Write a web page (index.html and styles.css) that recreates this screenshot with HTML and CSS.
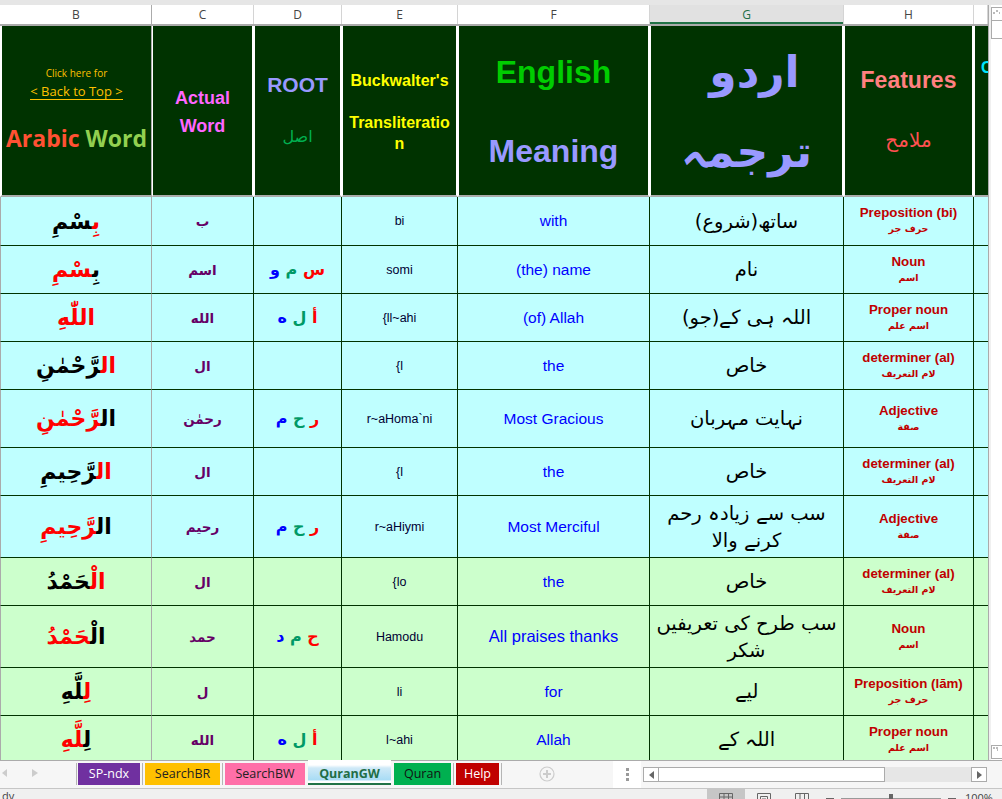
FILE: index.html
```html
<!DOCTYPE html>
<html lang="ur">
<head>
  <meta charset="UTF-8" />
  <meta name="viewport" content="width=device-width, initial-scale=1" />
  <title>QuranGW</title>
  <link rel="stylesheet" href="styles.css">
</head>
<body>
  <div class="top-strip"></div>

  <div class="main-area">
    <div class="sheet">
      <div class="col-heads">
        <div class="col-head col-b">B</div>
        <div class="col-head col-c">C</div>
        <div class="col-head col-d">D</div>
        <div class="col-head col-e">E</div>
        <div class="col-head col-f">F</div>
        <div class="col-head col-g selected">G</div>
        <div class="col-head col-h">H</div>
        <div class="col-head col-i"></div>
      </div>

      <div class="grid-clip">
        <table class="grid">
          <colgroup>
            <col class="col-b"><col class="col-c"><col class="col-d"><col class="col-e">
            <col class="col-f"><col class="col-g"><col class="col-h"><col class="col-i">
          </colgroup>
          <tr class="head-row">
            <th>
              <div class="click-here">Click here for</div>
              <div class="back-top">&lt; Back to Top &gt;</div>
              <div class="arabic-word"><span class="c-orange">Arabic</span> <span class="c-lime">Word</span></div>
            </th>
            <th class="actual">Actual<br>Word</th>
            <th class="root-head">
              <div class="root-en">ROOT</div>
              <div class="root-ar" dir="rtl">اصل</div>
            </th>
            <th class="buck">Buckwalter's<br><br>Transliteratio<br>n</th>
            <th class="meaning"><div class="c-green">English</div><div class="c-blue">Meaning</div></th>
            <th class="urdu-head" dir="rtl"><div class="urdu-top">اردو</div><div>ترجمہ</div></th>
            <th class="feat-head"><div class="feat-en">Features</div><div class="feat-ar" dir="rtl">ملامح</div></th>
            <th class="cut-head">C</th>
          </tr>

          <tr class="blue h49">
            <td class="ar" dir="rtl"><span class="red">بِ</span>سْمِ</td>
            <td class="act" dir="rtl">ب</td><td class="root"></td><td class="tr">bi</td><td class="en">with</td>
            <td class="ur" dir="rtl">ساتھ(شروع)</td>
            <td class="ft"><b>Preposition (bi)</b><i dir="rtl">حرف جر</i></td><td></td>
          </tr>
          <tr class="blue h48">
            <td class="ar" dir="rtl">بِ<span class="red">سْمِ</span></td>
            <td class="act" dir="rtl">اسم</td>
            <td class="root" dir="rtl"><span class="red">س</span> <span class="teal">م</span> <span class="blu">و</span></td>
            <td class="tr">somi</td><td class="en">(the) name</td>
            <td class="ur" dir="rtl">نام</td>
            <td class="ft"><b>Noun</b><i dir="rtl">اسم</i></td><td></td>
          </tr>
          <tr class="blue h48">
            <td class="ar" dir="rtl"><span class="red">اللّٰهِ</span></td>
            <td class="act" dir="rtl">الله</td>
            <td class="root" dir="rtl"><span class="red">أ</span> <span class="teal">ل</span> <span class="blu">ه</span></td>
            <td class="tr">{ll~ahi</td><td class="en">(of) Allah</td>
            <td class="ur" dir="rtl">اللہ ہی کے(جو)</td>
            <td class="ft"><b>Proper noun</b><i dir="rtl">اسم علم</i></td><td></td>
          </tr>
          <tr class="blue h48">
            <td class="ar" dir="rtl"><span class="red">ال</span>رَّحْمٰنِ</td>
            <td class="act" dir="rtl">ال</td><td class="root"></td><td class="tr">{l</td><td class="en">the</td>
            <td class="ur" dir="rtl">خاص</td>
            <td class="ft"><b>determiner (al)</b><i dir="rtl">لام التعریف</i></td><td></td>
          </tr>
          <tr class="blue h58">
            <td class="ar" dir="rtl">ال<span class="red">رَّحْمٰنِ</span></td>
            <td class="act" dir="rtl">رحمٰن</td>
            <td class="root" dir="rtl"><span class="red">ر</span> <span class="teal">ح</span> <span class="blu">م</span></td>
            <td class="tr">r~aHoma`ni</td><td class="en">Most Gracious</td>
            <td class="ur" dir="rtl">نہایت مہربان</td>
            <td class="ft"><b>Adjective</b><i dir="rtl">صفة</i></td><td></td>
          </tr>
          <tr class="blue h48">
            <td class="ar" dir="rtl"><span class="red">ال</span>رَّحِيمِ</td>
            <td class="act" dir="rtl">ال</td><td class="root"></td><td class="tr">{l</td><td class="en">the</td>
            <td class="ur" dir="rtl">خاص</td>
            <td class="ft"><b>determiner (al)</b><i dir="rtl">لام التعریف</i></td><td></td>
          </tr>
          <tr class="blue h62">
            <td class="ar" dir="rtl">ال<span class="red">رَّحِيمِ</span></td>
            <td class="act" dir="rtl">رحیم</td>
            <td class="root" dir="rtl"><span class="red">ر</span> <span class="teal">ح</span> <span class="blu">م</span></td>
            <td class="tr">r~aHiymi</td><td class="en">Most Merciful</td>
            <td class="ur" dir="rtl">سب سے زیادہ رحم کرنے والا</td>
            <td class="ft"><b>Adjective</b><i dir="rtl">صفة</i></td><td></td>
          </tr>

          <tr class="green h48">
            <td class="ar" dir="rtl"><span class="red">الْ</span>حَمْدُ</td>
            <td class="act" dir="rtl">ال</td><td class="root"></td><td class="tr">{lo</td><td class="en">the</td>
            <td class="ur" dir="rtl">خاص</td>
            <td class="ft"><b>determiner (al)</b><i dir="rtl">لام التعریف</i></td><td></td>
          </tr>
          <tr class="green h62">
            <td class="ar" dir="rtl">الْ<span class="red">حَمْدُ</span></td>
            <td class="act" dir="rtl">حمد</td>
            <td class="root" dir="rtl"><span class="red">ح</span> <span class="teal">م</span> <span class="blu">د</span></td>
            <td class="tr">Hamodu</td><td class="en en-big">All praises thanks</td>
            <td class="ur" dir="rtl">سب طرح کی تعریفیں شکر</td>
            <td class="ft"><b>Noun</b><i dir="rtl">اسم</i></td><td></td>
          </tr>
          <tr class="green h48">
            <td class="ar" dir="rtl"><span class="red">لِ</span>لَّهِ</td>
            <td class="act" dir="rtl">ل</td><td class="root"></td><td class="tr">li</td><td class="en">for</td>
            <td class="ur" dir="rtl">لیے</td>
            <td class="ft"><b>Preposition (lām)</b><i dir="rtl">حرف جر</i></td><td></td>
          </tr>
          <tr class="green h48">
            <td class="ar" dir="rtl">لِ<span class="red">لَّهِ</span></td>
            <td class="act" dir="rtl">الله</td>
            <td class="root" dir="rtl"><span class="red">أ</span> <span class="teal">ل</span> <span class="blu">ه</span></td>
            <td class="tr">l~ahi</td><td class="en">Allah</td>
            <td class="ur" dir="rtl">اللہ کے</td>
            <td class="ft"><b>Proper noun</b><i dir="rtl">اسم علم</i></td><td></td>
          </tr>
        </table>
      </div>
    </div>

    <div class="v-scroll">
      <div class="split-box"><svg width="9" height="6" viewBox="0 0 9 6"><path d="M1 5h2M4 3h2M7 5h1" stroke="#777" fill="none"/></svg></div>
      <div class="v-btn"></div>
      <div class="v-track"></div>
      <div class="split-box bottom"><svg width="9" height="6" viewBox="0 0 9 6"><path d="M1 2h2M4 2h2M5 4h1" stroke="#777" fill="none"/></svg></div>
    </div>
  </div>

  <div class="tab-bar">
    <div class="tab-nav">
      <svg width="6" height="8" viewBox="0 0 6 8"><path d="M5 0v8L0 4z" fill="#ccc"/></svg>
      <svg width="6" height="8" viewBox="0 0 6 8"><path d="M0 0v8l6-4z" fill="#ccc"/></svg>
    </div>
    <div class="tabs">
      <div class="tab t-purple">SP-ndx</div>
      <div class="tab t-amber">SearchBR</div>
      <div class="tab t-pink">SearchBW</div>
      <div class="tab t-active">QuranGW</div>
      <div class="tab t-green">Quran</div>
      <div class="tab t-red">Help</div>
    </div>
    <div class="add-sheet">
      <svg width="16" height="16" viewBox="0 0 16 16"><circle cx="8" cy="8" r="7" fill="none" stroke="#ccc" stroke-width="1.2"/><path d="M8 4v8M4 8h8" stroke="#ccc" stroke-width="2"/></svg>
    </div>
    <div class="tab-dots"><span></span><span></span><span></span></div>
    <div class="h-scroll">
      <div class="h-btn"><svg width="5" height="8" viewBox="0 0 5 8"><path d="M5 0v8L0 4z" fill="#666"/></svg></div>
      <div class="h-thumb"></div>
      <div class="h-track"></div>
      <div class="h-btn"><svg width="5" height="8" viewBox="0 0 5 8"><path d="M0 0v8l5-4z" fill="#666"/></svg></div>
    </div>
  </div>

  <div class="status-bar">
    <div class="ready">dy</div>
    <div class="view-btn on"><svg width="14" height="12" viewBox="0 0 14 12"><path d="M.5.5h13v11H.5zM.5 4h13M.5 8h13M5 .5v11M9.500 .5v11" fill="none" stroke="#666"/></svg></div>
    <div class="view-btn"><svg width="14" height="12" viewBox="0 0 14 12"><path d="M.5.5h13v11H.5zM3.500 3.500h7v8h-7zM5 6h4M5 8h4" fill="none" stroke="#666"/></svg></div>
    <div class="view-btn"><svg width="14" height="12" viewBox="0 0 14 12"><path d="M.5.5h13v11H.5zM5 .5v11M9.500 .5v11" fill="none" stroke="#666"/></svg></div>
    <div class="zoom-minus"></div>
    <div class="zoom-slider"><span></span></div>
    <div class="zoom-plus"></div>
    <div class="zoom-pct">100%</div>
  </div>
</body>
</html>
```

FILE: styles.css
```css
* {
  margin: 0;
  padding: 0;
  box-sizing: border-box;
}
html, body {
  width: 1002px;
  height: 799px;
  overflow: hidden;
  background: #f0f0f0;
  font-family: 'Liberation Sans', 'DejaVu Sans', sans-serif;
}
.top-strip {
  height: 5px;
  background: #e6e6e6;
}
.main-area {
  display: flex;
  height: 755px;
  background: #fff;
}
.sheet {
  width: 989px;
  flex-shrink: 0;
  border-right: 1px solid #ababab;
}
/* Заголовки столбцов */
.col-heads {
  display: flex;
  height: 21px;
  padding-left: 1px;
  border-bottom: 2px solid #ababab;
  background: #fff;
}
.col-head {
  font-family: 'Open Sans', sans-serif;
  font-size: 12px;
  line-height: 19px;
  text-align: center;
  color: #444;
  border-right: 1px solid #d4d4d4;
  flex-shrink: 0;
}
.col-head.col-b { border-right: 1px solid #ababab; }
.col-head.selected {
  background: #e1e1e1;
  color: #1f6e46;
  box-shadow: inset 0 -2px 0 #217346;
}
.col-b { width: 151px; }
.col-c { width: 102px; }
.col-d { width: 88px; }
.col-e { width: 116px; }
.col-f { width: 192px; }
.col-g { width: 194px; }
.col-h { width: 130px; }
.col-i { width: 14px; }
.grid col.col-b { width: 152px; }

.grid-clip {
  height: 734px;
  overflow: hidden;
}
.grid {
  table-layout: fixed;
  width: 988px;
  border-collapse: separate;
  border-spacing: 0;
}
/* Шапка таблицы */
.head-row th {
  height: 171px;
  padding-top: 3px;
  background: #003300;
  border-right: 2px solid #fff;
  border-bottom: 2px solid #ababab;
  border-left: 1px solid #fff;
  font-weight: 700;
  text-align: center;
  vertical-align: middle;
  overflow: hidden;
}
.head-row th:first-child {
  border-left: 2px solid #fff;
  border-right: 1px solid #ababab;
  padding-bottom: 5px;
}
.head-row th.cut-head {
  border-right: 0;
  text-align: left;
  font-size: 16px;
  color: #00e5ff;
  padding: 0 0 86px 6px;
  white-space: nowrap;
}
.click-here {
  font-size: 10px;
  font-family: 'Open Sans', sans-serif;
  font-weight: 400;
  color: #ffc000;
}
.back-top {
  font-size: 13px;
  font-family: 'Open Sans', sans-serif;
  font-weight: 400;
  color: #ffc000;
  display: inline-block;
  border-bottom: 1px solid #ffc000;
  margin-top: 3px;
  line-height: 16px;
}
.arabic-word {
  font-family: 'Open Sans', sans-serif;
  font-size: 23px;
  margin-top: 22px;
}
.c-orange { color: #ff5133; }
.c-lime { color: #92d050; }
.actual {
  font-size: 18px;
  line-height: 28px;
  color: #ff66ff;
}
.head-row th.root-head { padding-bottom: 6px; }
.root-en {
  font-size: 21px;
  color: #9999ff;
}
.root-ar {
  font-family: 'DejaVu Sans', sans-serif;
  font-size: 16px;
  font-weight: 400;
  color: #00b050;
  margin-top: 30px;
}
.buck {
  font-size: 16px;
  line-height: 21px;
  color: #ffff00;
}
.meaning {
  font-size: 32px;
  line-height: 79px;
}
.c-green { color: #00cc00; }
.c-blue { color: #9999ff; }
.urdu-head {
  font-family: 'DejaVu Sans', sans-serif;
  font-size: 44px;
  line-height: 80px;
  color: #9999ff;
}
.urdu-top { padding-left: 16px; }
.head-row th.feat-head { padding-bottom: 6px; }
.feat-en {
  font-size: 23px;
  color: #ff8080;
}
.feat-ar {
  font-family: 'DejaVu Sans', sans-serif;
  font-size: 20px;
  font-weight: 400;
  color: #ff5050;
  margin-top: 34px;
}
/* Строки данных */
.h48 td { height: 48px; }
.h49 td { height: 49px; }
.h58 td { height: 58px; }
.h62 td { height: 62px; }
.grid td {
  border-right: 1px solid #003300;
  border-bottom: 1px solid #003300;
  text-align: center;
  vertical-align: middle;
  overflow: hidden;
}
.grid td:first-child { border-right: 1px solid #ababab; border-left: 1px solid #ababab; }
.grid td:last-child { border-right: 0; }
.blue td { background: #bfffff; }
.green td { background: #ccffcc; }
.ar {
  font-family: 'DejaVu Sans', sans-serif;
  font-size: 22px;
  font-weight: 700;
  color: #000;
}
.red { color: #ff0000; }
.teal { color: #009966; }
.blu { color: #0000ff; }
.act {
  font-family: 'DejaVu Sans', sans-serif;
  font-size: 13.5px;
  font-weight: 700;
  color: #660066;
}
.root {
  font-family: 'DejaVu Sans', sans-serif;
  font-size: 16px;
  font-weight: 700;
}
.tr {
  font-size: 12.5px;
  color: #000033;
}
.en {
  font-size: 15.5px;
  color: #0000ff;
}
.en-big { font-size: 16.5px; }
.ur {
  font-family: 'DejaVu Sans', sans-serif;
  font-size: 19.5px;
  line-height: 27px;
  color: #000;
  padding: 0 4px;
}
.ft b {
  display: block;
  font-size: 13.3px;
  line-height: 16px;
  color: #c00000;
}
.ft i {
  display: block;
  font-family: 'DejaVu Sans', sans-serif;
  font-size: 9.5px;
  font-style: normal;
  font-weight: 700;
  line-height: 16px;
  color: #c00000;
}
/* Вертикальная прокрутка */
.v-scroll {
  flex: 1;
  display: flex;
  flex-direction: column;
  background: #fff;
  border-left: 2px solid #f0f0f0;
}
.split-box {
  height: 14px;
  margin-top: 2px;
  border: 1px solid #ababab;
  border-right: 0;
  background: #fff;
  line-height: 0;
}
.split-box.bottom {
  margin: 0 0 1px;
}
.v-btn {
  height: 18px;
  border: 1px solid #ababab;
  border-top: 0;
  border-right: 0;
  background: #fff;
}
.v-track {
  flex: 1;
}
/* Панель листов */
.tab-bar {
  display: flex;
  align-items: flex-start;
  height: 29px;
  border-bottom: 1px solid #c6c6c6;
  background: #f6f6f6;
  border-top: 1px solid #ababab;
}
.tab-nav {
  width: 76px;
  display: flex;
  flex-shrink: 0;
  gap: 24px;
  padding: 8px 0 0 2px;
}
.tabs {
  display: flex;
  width: 430px;
  flex-shrink: 0;
  height: 22px;
  padding-left: 1px;
  margin-top: 2px;
  border-left: 1px solid #b5b5b5;
}
.tab {
  height: 22px;
  font-family: 'Open Sans', sans-serif;
  font-size: 12.5px;
  line-height: 21px;
  text-align: center;
  margin-right: 5px;
  position: relative;
}
.tab::after {
  content: "";
  position: absolute;
  top: 0;
  right: -3px;
  width: 1px;
  height: 22px;
  background: #b5b5b5;
}
.t-purple { width: 62px; background: #7030a0; color: #fff; }
.t-amber { width: 75px; background: #ffc000; color: #222; }
.t-pink { width: 80px; margin-right: 3px; background: #ff6fa8; color: #222; }
.t-pink::after { display: none; }
.t-active {
  width: 83px;
  height: 25px;
  margin: -3px 3px 0 0;
  padding-top: 3px;
  background: linear-gradient(#fff 0, #fff 5px, #cfe9f7 8px, #a8dcf5 20px, #fff 21px);
  border-bottom: 2px solid #217346;
  color: #1f6e46;
  font-weight: 700;
}
.t-active::after { display: none; }
.t-green { width: 57px; background: #00b050; color: #111; }
.t-red { width: 43px; background: #c00000; color: #fff; }
.add-sheet {
  width: 107px;
  flex-shrink: 0;
  padding: 5px 0 0 33px;
}
.tab-dots {
  width: 28px;
  height: 27px;
  flex-shrink: 0;
  background: #fff;
  display: flex;
  flex-direction: column;
  align-items: center;
  gap: 2px;
  padding-top: 7px;
}
.tab-dots span {
  width: 3px;
  height: 3px;
  background: #9a9a9a;
}
.h-scroll {
  display: flex;
  width: 344px;
  flex-shrink: 0;
  height: 15px;
  margin: 6px 0 0 2px;
  background: #e6e6e6;
}
.h-btn {
  width: 16px;
  height: 15px;
  border: 1px solid #ababab;
  background: #fff;
  display: flex;
  align-items: center;
  justify-content: center;
  flex-shrink: 0;
}
.h-thumb {
  width: 226px;
  background: #fff;
  border-right: 1px solid #ababab;
  border-top: 1px solid #ababab;
  border-bottom: 1px solid #ababab;
}
.h-track { flex: 1; }
/* Строка состояния */
.status-bar {
  display: flex;
  align-items: flex-start;
  height: 10px;
  background: #f0f0f0;
  overflow: hidden;
  font-family: 'Open Sans', sans-serif;
  font-size: 11px;
  color: #444;
}
.ready {
  width: 707px;
  line-height: 14px;
  padding-left: 2px;
}
.view-btn {
  width: 38px;
  height: 20px;
  display: flex;
  justify-content: center;
  padding-top: 4px;
}
.view-btn.on { background: #c6c6c6; }
.zoom-minus {
  width: 8px;
  height: 1px;
  background: #666;
  margin: 9px 7px 0 5px;
}
.zoom-slider {
  width: 100px;
  height: 1px;
  background: #999;
  margin-top: 9px;
  position: relative;
}
.zoom-slider span {
  position: absolute;
  left: 48px;
  top: -4px;
  width: 4px;
  height: 9px;
  background: #666;
}
.zoom-plus {
  width: 8px;
  height: 1px;
  background: #666;
  margin: 9px 0 0 7px;
}
.zoom-pct {
  margin-left: 9px;
  padding-top: 1px;
}
```
